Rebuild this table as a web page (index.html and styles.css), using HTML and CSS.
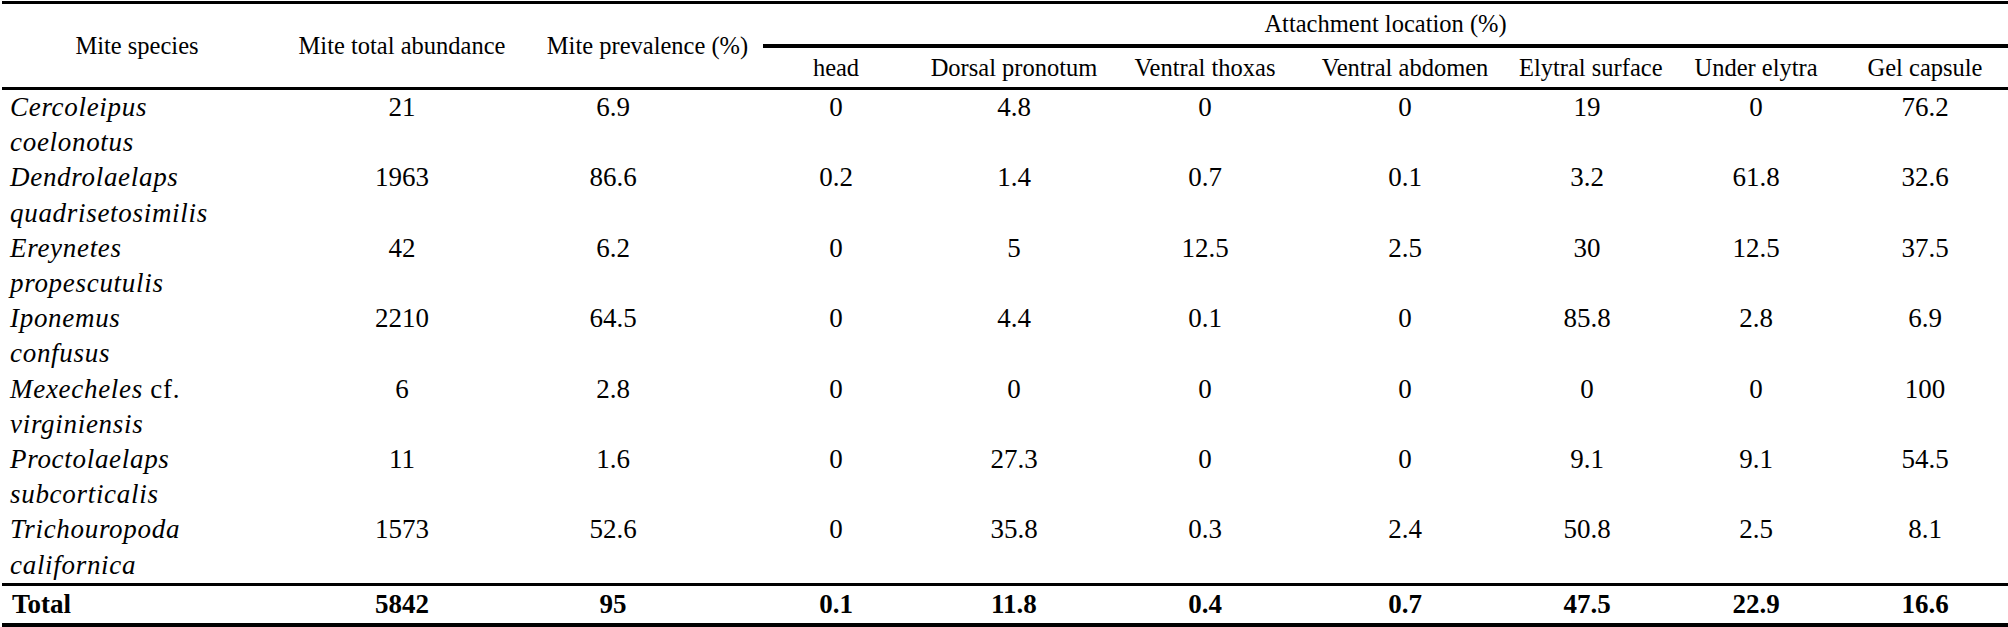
FILE: index.html
```html
<!DOCTYPE html>
<html lang="en">
<head>
<meta charset="utf-8">
<title>Mite attachment table</title>
<link rel="stylesheet" href="styles.css">
</head>
<body>
<table class="mites">
  <colgroup>
    <col class="w-species">
    <col class="w-abund">
    <col class="w-prev">
    <col class="w-head">
    <col class="w-dorsal">
    <col class="w-vthor">
    <col class="w-vabd">
    <col class="w-elyt">
    <col class="w-under">
    <col class="w-gel">
  </colgroup>
  <thead>
    <tr class="hrow1">
      <th rowspan="2" class="hcell hmain">Mite species</th>
      <th rowspan="2" class="hcell hmain">Mite total abundance</th>
      <th rowspan="2" class="hcell hmain">Mite prevalence (%)</th>
      <th colspan="7" class="hcell hgroup">Attachment location (%)</th>
    </tr>
    <tr class="hrow2">
      <th class="hcell hsub">head</th>
      <th class="hcell hsub">Dorsal pronotum</th>
      <th class="hcell hsub">Ventral thoxas</th>
      <th class="hcell hsub">Ventral abdomen</th>
      <th class="hcell hsub">Elytral surface</th>
      <th class="hcell hsub">Under elytra</th>
      <th class="hcell hsub hlast">Gel capsule</th>
    </tr>
  </thead>
  <tbody>
    <tr class="drow">
      <td class="species"><i>Cercoleipus</i><br><i>coelonotus</i></td>
      <td class="num">21</td><td class="num prev">6.9</td>
      <td class="num">0</td><td class="num">4.8</td><td class="num">0</td><td class="num">0</td><td class="num">19</td><td class="num">0</td><td class="num last">76.2</td>
    </tr>
    <tr class="drow">
      <td class="species"><i>Dendrolaelaps</i><br><i>quadrisetosimilis</i></td>
      <td class="num">1963</td><td class="num prev">86.6</td>
      <td class="num">0.2</td><td class="num">1.4</td><td class="num">0.7</td><td class="num">0.1</td><td class="num">3.2</td><td class="num">61.8</td><td class="num last">32.6</td>
    </tr>
    <tr class="drow">
      <td class="species"><i>Ereynetes</i><br><i>propescutulis</i></td>
      <td class="num">42</td><td class="num prev">6.2</td>
      <td class="num">0</td><td class="num">5</td><td class="num">12.5</td><td class="num">2.5</td><td class="num">30</td><td class="num">12.5</td><td class="num last">37.5</td>
    </tr>
    <tr class="drow">
      <td class="species"><i>Iponemus</i><br><i>confusus</i></td>
      <td class="num">2210</td><td class="num prev">64.5</td>
      <td class="num">0</td><td class="num">4.4</td><td class="num">0.1</td><td class="num">0</td><td class="num">85.8</td><td class="num">2.8</td><td class="num last">6.9</td>
    </tr>
    <tr class="drow">
      <td class="species"><i>Mexecheles</i> cf.<br><i>virginiensis</i></td>
      <td class="num">6</td><td class="num prev">2.8</td>
      <td class="num">0</td><td class="num">0</td><td class="num">0</td><td class="num">0</td><td class="num">0</td><td class="num">0</td><td class="num last">100</td>
    </tr>
    <tr class="drow">
      <td class="species"><i>Proctolaelaps</i><br><i>subcorticalis</i></td>
      <td class="num">11</td><td class="num prev">1.6</td>
      <td class="num">0</td><td class="num">27.3</td><td class="num">0</td><td class="num">0</td><td class="num">9.1</td><td class="num">9.1</td><td class="num last">54.5</td>
    </tr>
    <tr class="drow">
      <td class="species"><i>Trichouropoda</i><br><i>californica</i></td>
      <td class="num">1573</td><td class="num prev">52.6</td>
      <td class="num">0</td><td class="num">35.8</td><td class="num">0.3</td><td class="num">2.4</td><td class="num">50.8</td><td class="num">2.5</td><td class="num last">8.1</td>
    </tr>
  </tbody>
  <tfoot>
    <tr class="trow">
      <td class="tlabel">Total</td>
      <td class="tnum">5842</td><td class="tnum prev">95</td>
      <td class="tnum">0.1</td><td class="tnum">11.8</td><td class="tnum">0.4</td><td class="tnum">0.7</td><td class="tnum">47.5</td><td class="tnum">22.9</td><td class="tnum last">16.6</td>
    </tr>
  </tfoot>
</table>
</body>
</html>
```

FILE: styles.css
```css
html, body {
  margin: 0;
  padding: 0;
  background: #ffffff;
}

body,
.mites,
.mites th,
.mites td,
.mites i {
  font-family: "Liberation Serif", "Tinos", "Times New Roman", "DejaVu Serif", serif;
  color: #000000;
}

.mites {
  margin: 1px 0 0 2px;
  width: 2006px;
  table-layout: fixed;
  border-collapse: separate;
  border-spacing: 0;
  border-top: 3px solid #000;
}

.w-species { width: 270px; }
.w-abund   { width: 260px; }
.w-prev    { width: 231px; }
.w-head    { width: 146px; }
.w-dorsal  { width: 210px; }
.w-vthor   { width: 172px; }
.w-vabd    { width: 228px; }
.w-elyt    { width: 136px; }
.w-under   { width: 202px; }
.w-gel     { width: 151px; }

.hcell {
  font-weight: normal;
  font-size: 24.5px;
  text-align: center;
  padding: 0;
  white-space: nowrap;
  vertical-align: middle;
}

.hmain {
  border-bottom: 3px solid #000;
}

.hrow1 .hgroup {
  height: 40px;
  border-bottom: 4px solid #000;
  line-height: 40px;
}

.hsub {
  height: 39px;
  line-height: 39px;
  border-bottom: 3px solid #000;
}

.hlast {
  padding-right: 15px;
}

.drow td {
  height: 70.4px;
  padding: 0;
  vertical-align: top;
  line-height: 35.2px;
  font-size: 27px;
}

.species {
  text-align: left;
  padding-left: 8px !important;
  white-space: nowrap;
  letter-spacing: 0.7px;
}

.num {
  text-align: center;
}

.prev {
  padding-right: 69px !important;
}

.last {
  padding-right: 15px !important;
}

.trow td {
  height: 37px;
  padding: 0;
  border-top: 3px solid #000;
  border-bottom: 4px solid #000;
  font-size: 27px;
  font-weight: bold;
  line-height: 37px;
  vertical-align: middle;
}

.tlabel {
  text-align: left;
  padding-left: 10px !important;
}

.tnum {
  text-align: center;
}
```
